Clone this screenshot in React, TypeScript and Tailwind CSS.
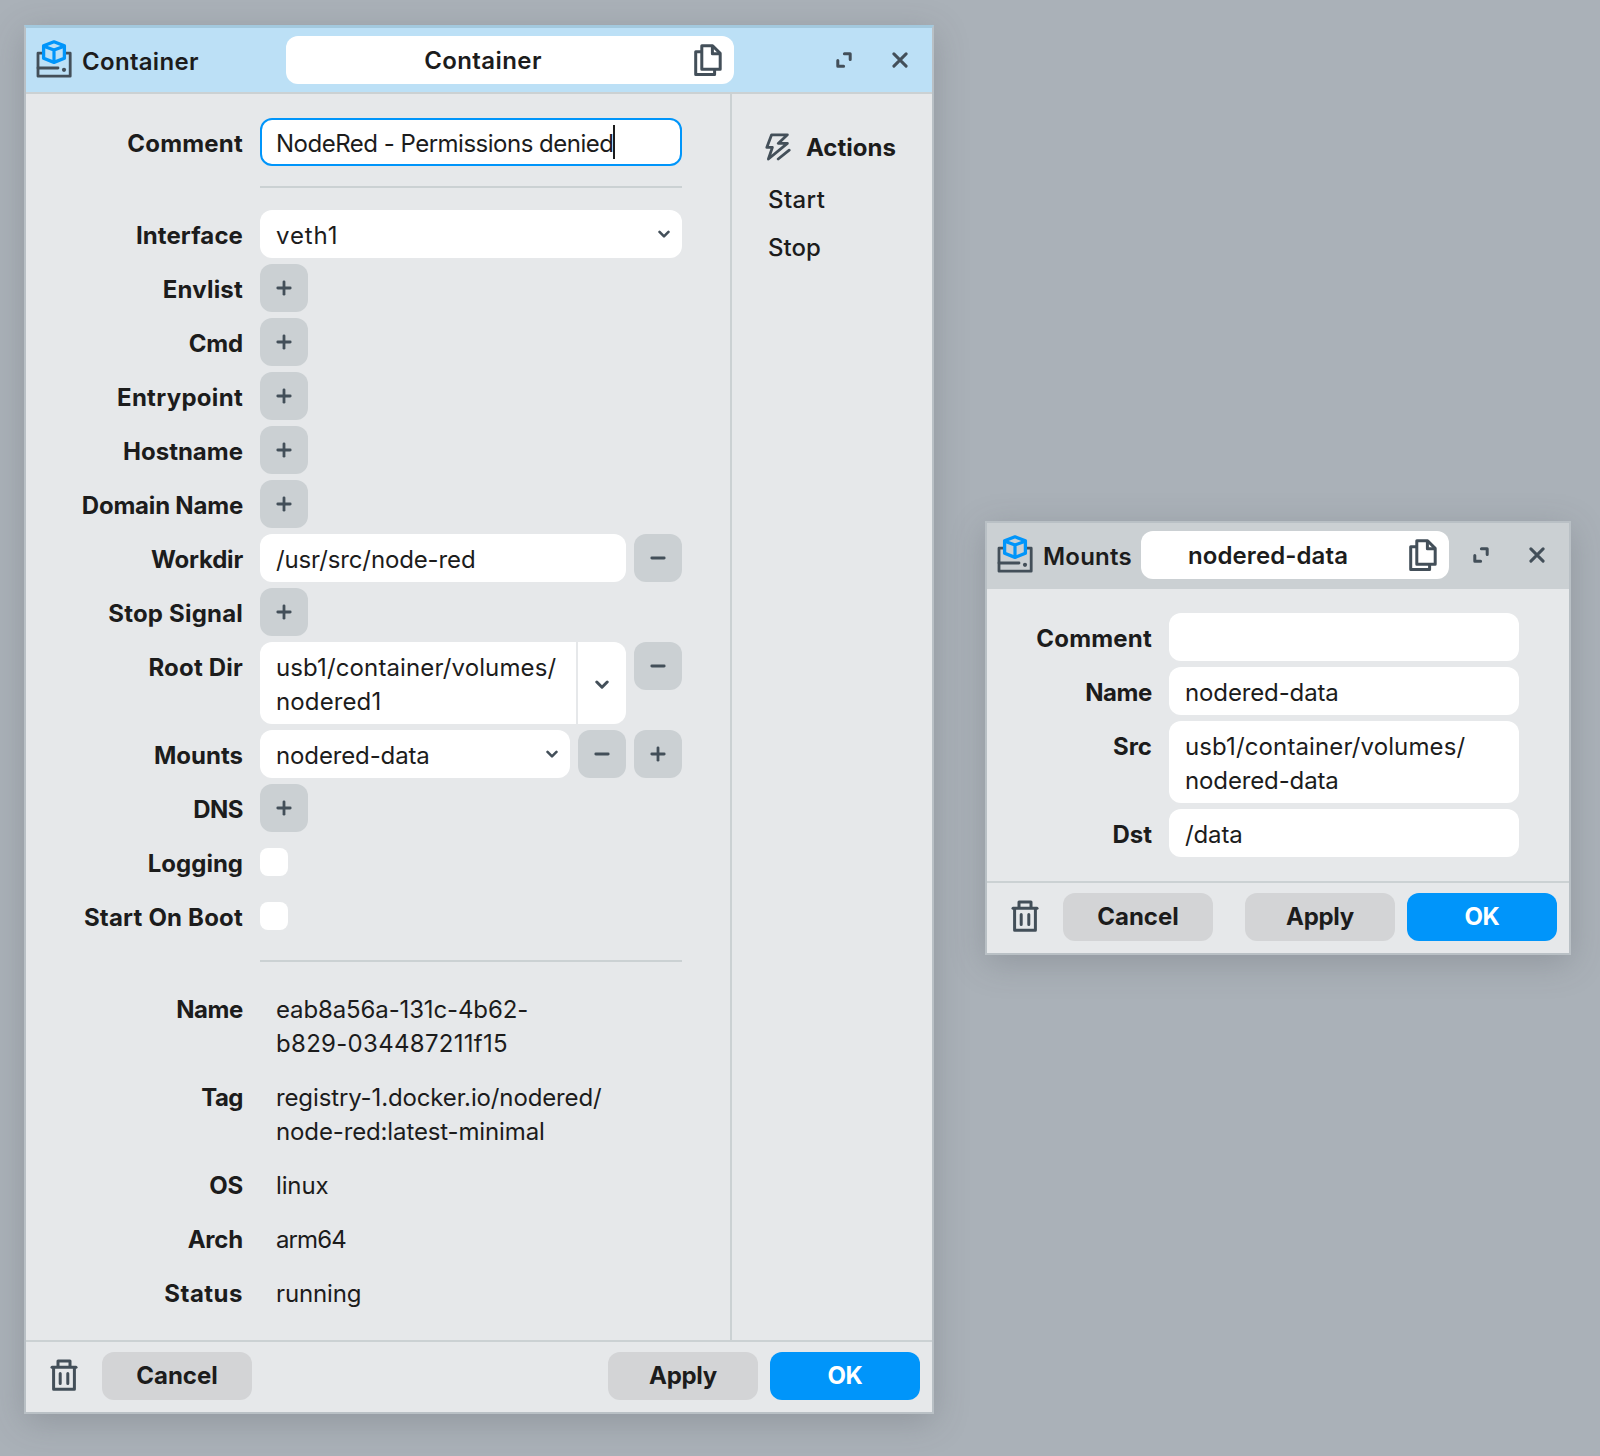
import React from 'react';

type IconProps = { className?: string };

const ContainerIcon: React.FC<IconProps> = ({ className }) => (
  <svg viewBox="0 0 36 38" fill="none" className={className}>
    <path d="M7 13.2H2V36.2H34.2V13.2H29" stroke="#434f59" strokeWidth="2.8" strokeLinejoin="round" />
    <path d="M2 28H22" stroke="#434f59" strokeWidth="2.8" strokeLinecap="round" />
    <circle cx="28" cy="29.8" r="2.1" fill="#434f59" />
    <path d="M18 1.8L28.4 5.8V18.2L18 22.4L7.6 18.2V5.8Z" stroke="#0095fa" strokeWidth="3.3" strokeLinejoin="round" />
    <path d="M7.8 6.2L18 10L28.2 6.2M18 10V22" stroke="#0095fa" strokeWidth="3.2" strokeLinejoin="round" />
  </svg>
);

const CopyIcon: React.FC<IconProps> = ({ className }) => (
  <svg viewBox="0 0 28 32" fill="none" stroke="#434f59" strokeWidth="3" strokeLinejoin="round" className={className}>
    <path d="M7.8 1.7H18.6L26.2 9.4V25.2H7.8Z" />
    <path d="M18.4 2V9.8H26" />
    <path d="M7.4 7.8H1.7V30.4H20.6V25.4" />
  </svg>
);

const ExpandIcon: React.FC<IconProps> = ({ className }) => (
  <svg viewBox="0 0 16 16" fill="none" stroke="#434f59" strokeWidth="3" strokeLinecap="round" strokeLinejoin="round" className={className}>
    <path d="M8.4 1.8H14.2V7.4" />
    <path d="M1.8 8.4V14.2H7.6" />
  </svg>
);

const CloseIcon: React.FC<IconProps> = ({ className }) => (
  <svg viewBox="0 0 16 16" fill="none" stroke="#434f59" strokeWidth="3" strokeLinecap="round" className={className}>
    <path d="M1.9 1.9L14.1 14.1M14.1 1.9L1.9 14.1" />
  </svg>
);

const BoltIcon: React.FC<IconProps> = ({ className }) => (
  <svg viewBox="0 0 26 28" fill="none" stroke="#434f59" strokeWidth="2.8" strokeLinecap="round" strokeLinejoin="round" className={className}>
    <path d="M6.6 1.8H22.4L13.2 10.4H22.4L3.4 26L7.4 14.4H1.8Z" />
    <path d="M13.2 26L24.2 17.2" />
  </svg>
);

const TrashIcon: React.FC<IconProps> = ({ className }) => (
  <svg viewBox="0 0 28 32" fill="none" stroke="#434f59" strokeWidth="3" className={className}>
    <path d="M2 8.2H26" strokeLinecap="round" />
    <path d="M8 7.8V1.9H20V7.8" strokeLinejoin="round" />
    <path d="M3.6 8.2V30.2H24.4V8.2" strokeLinejoin="round" />
    <path d="M10.2 14.4V24.4M17.8 14.4V24.4" strokeLinecap="round" />
  </svg>
);

const ChevronIcon: React.FC<IconProps> = ({ className }) => (
  <svg viewBox="0 0 14 10" fill="none" stroke="#434f59" strokeWidth="3" strokeLinecap="round" strokeLinejoin="round" className={className}>
    <path d="M1.8 2L7 7.2L12.2 2" />
  </svg>
);

const SignButton: React.FC<{ sign: 'plus' | 'minus' }> = ({ sign }) => (
  <button className="flex h-12 w-12 shrink-0 items-center justify-center rounded-xl bg-[#cbd0d3]" title={sign}>
    <svg viewBox="0 0 16 16" fill="none" stroke="#434f59" strokeWidth="2.8" strokeLinecap="round" className="h-4 w-4">
      <path d="M1.8 8H14.2" />
      {sign === 'plus' && <path d="M8 1.8V14.2" />}
    </svg>
  </button>
);

const LABEL_TRACKING: Record<string, string> = {
  Comment: 'tracking-[0.2px]',
  Interface: 'tracking-[0.1px]',
  Envlist: 'tracking-[0.2px]',
  Cmd: 'tracking-[-0.2px]',
  Entrypoint: 'tracking-[0.3px]',
  'Domain Name': 'tracking-[-0.2px]',
  Workdir: 'tracking-[-0.2px]',
  'Stop Signal': 'tracking-[0.2px]',
  'Root Dir': 'tracking-[0.2px]',
  DNS: 'tracking-[-0.5px]',
  'Start On Boot': 'tracking-[0.2px]',
  Name: 'tracking-[-0.4px]',
  Tag: 'tracking-[-0.5px]',
  OS: 'tracking-[-0.2px]',
  Arch: 'tracking-[-0.2px]',
  Status: 'tracking-[0.5px]',
};

const Row: React.FC<{ label: string; labelClass?: string; children?: React.ReactNode }> = ({ label, labelClass = 'w-[218px]', children }) => (
  <div className="flex items-start gap-4">
    <div className={`${labelClass} ${LABEL_TRACKING[label] || 'tracking-normal'} shrink-0 whitespace-nowrap pr-px pt-[9px] text-right font-bold leading-[34px]`}>{label}</div>
    {children}
  </div>
);

const Field: React.FC<{ className?: string; children?: React.ReactNode }> = ({ className = '', children }) => (
  <div className={`min-h-12 rounded-xl bg-white px-4 pb-[5px] pt-[9px] leading-[34px] ${className}`}>{children}</div>
);

const Select: React.FC<{ className?: string; value: string }> = ({ className = '', value }) => (
  <div className={`flex h-12 items-center justify-between rounded-xl bg-white pl-4 pr-3 ${className}`}>
    <span className="pt-[3px]">{value}</span>
    <ChevronIcon className="h-[9px] w-3" />
  </div>
);

const TitlePill: React.FC<{ className?: string; title: string }> = ({ className = '', title }) => (
  <div className={`flex h-12 items-center rounded-xl bg-white pr-3 ${className}`}>
    <span className="flex-1 pt-px text-center font-semibold">{title}</span>
    <CopyIcon className="ml-[14px] h-8 w-7" />
  </div>
);

const Divider = () => <div className="ml-[234px] h-0.5 w-[422px] bg-[#cbd1d3]" />;

const Footer = () => (
  <div className="flex h-[72px] items-start border-t-2 border-[#cbd1d3] pl-6 pr-3 pt-[10px] font-bold tracking-normal">
    <TrashIcon className="mt-[7px] h-8 w-7" />
    <button className="ml-6 h-12 w-[150px] rounded-xl bg-[#d3d4d6]">Cancel</button>
    <div className="ml-auto flex gap-3">
      <button className="h-12 w-[150px] rounded-xl bg-[#d3d4d6] tracking-[-0.3px]">Apply</button>
      <button className="h-12 w-[150px] rounded-xl bg-[#0095fa] tracking-[-0.3px] text-white">OK</button>
    </div>
  </div>
);

const ADDABLE = ['Envlist', 'Cmd', 'Entrypoint', 'Hostname', 'Domain Name'];

const INFO = [
  { label: 'Name', lines: ['eab8a56a-131c-4b62-', 'b829-034487211f15'] },
  { label: 'Tag', lines: ['registry-1.docker.io/nodered/', 'node-red:latest-minimal'] },
  { label: 'OS', lines: ['linux'] },
  { label: 'Arch', lines: ['arm64'] },
  { label: 'Status', lines: ['running'] },
];

const LINE_TRACKING: Record<string, string> = {
  'b829-034487211f15': 'tracking-[0.3px]',
  arm64: 'tracking-[-0.9px]',
};

const ContainerWindow = () => (
  <section className="ml-6 mt-[25px] flex h-[1389px] w-[910px] shrink-0 flex-col border-2 border-t-[3px] border-[#b9c0c5] border-t-[#a3c9de] bg-[#e6e8ea] shadow-[0_8px_32px_rgba(70,76,84,0.25)]">
    <header className="flex h-[66px] shrink-0 items-start border-b-2 border-[#cbd1d3] bg-[#bce0f6] pl-[10px] pt-2">
      <ContainerIcon className="mt-1 h-[38px] w-9" />
      <span className="ml-[10px] mt-[9px] w-[204px] font-semibold leading-[34px] tracking-[0.3px]">Container</span>
      <TitlePill className="w-[448px] tracking-[0.4px]" title="Container" />
      <ExpandIcon className="ml-[102px] mt-4 h-4 w-4" />
      <CloseIcon className="ml-10 mt-4 h-4 w-4" />
    </header>

    <div className="flex flex-1">
      <div className="w-[706px] border-r-2 border-[#cbd1d3] pt-6">
        <Row label="Comment">
          <div className="flex h-12 w-[422px] items-center rounded-xl border-2 border-[#0095fa] bg-white pl-[14px]">
            <span className="pt-[3px] tracking-[-0.5px]">NodeRed - Permissions denied</span>
            <span className="h-[34px] w-0.5 bg-[#1c1c1c]" />
          </div>
        </Row>
        <div className="py-5 pb-[22px]"><Divider /></div>

        <div className="flex flex-col gap-1.5">
          <Row label="Interface"><Select className="w-[422px] tracking-[0.9px]" value="veth1" /></Row>
          {ADDABLE.map(label => (
            <Row key={label} label={label}><SignButton sign="plus" /></Row>
          ))}
          <Row label="Workdir">
            <div className="flex gap-2">
              <Field className="w-[366px]">/usr/src/node-red</Field>
              <SignButton sign="minus" />
            </div>
          </Row>
          <Row label="Stop Signal"><SignButton sign="plus" /></Row>
          <Row label="Root Dir">
            <div className="flex items-start gap-2">
              <div className="flex h-[82px] w-[366px] gap-0.5">
                <Field className="w-[316px] rounded-r-none tracking-[0.12px]">usb1/container/volumes/<br />nodered1</Field>
                <div className="flex w-12 items-center justify-center rounded-r-xl bg-white">
                  <ChevronIcon className="mt-[3px] h-[10px] w-[14px]" />
                </div>
              </div>
              <SignButton sign="minus" />
            </div>
          </Row>
          <Row label="Mounts">
            <div className="flex gap-2">
              <Select className="w-[310px]" value="nodered-data" />
              <SignButton sign="minus" />
              <SignButton sign="plus" />
            </div>
          </Row>
          <Row label="DNS"><SignButton sign="plus" /></Row>
          {['Logging', 'Start On Boot'].map(label => (
            <Row key={label} label={label}>
              <div className="flex h-12 items-start pt-[10px]"><div className="h-7 w-7 rounded-lg bg-white" /></div>
            </Row>
          ))}
        </div>
        <div className="pb-[22px] pt-5"><Divider /></div>

        <div className="flex flex-col gap-1.5">
          {INFO.map(({ label, lines }) => (
            <Row key={label} label={label}>
              <div className="px-4 pb-[5px] pt-[9px] leading-[34px]">
                {lines.map(line => <div key={line} className={LINE_TRACKING[line]}>{line}</div>)}
              </div>
            </Row>
          ))}
        </div>
      </div>

      <aside className="flex-1 pl-[33px] pt-[37px]">
        <div className="flex items-center">
          <BoltIcon className="-mt-0.5 h-7 w-[26px]" />
          <h2 className="ml-[15px] font-bold leading-[34px] tracking-normal">Actions</h2>
        </div>
        <div className="ml-[3px] mt-[11px] font-medium leading-[48px] tracking-normal">
          <div className="tracking-[0.4px]">Start</div>
          <div>Stop</div>
        </div>
      </aside>
    </div>

    <Footer />
  </section>
);

const MountsWindow = () => (
  <section className="ml-[51px] mt-[521px] flex h-[434px] w-[586px] shrink-0 flex-col border-2 border-[#b9c0c5] bg-[#e6e8ea] shadow-[0_8px_32px_rgba(70,76,84,0.25)]">
    <header className="flex h-[66px] shrink-0 items-start bg-[#cbd0d3] pl-[10px] pt-2">
      <ContainerIcon className="mt-1 h-[38px] w-9" />
      <span className="ml-[10px] mt-[9px] w-[98px] font-semibold leading-[34px] tracking-[0.2px]">Mounts</span>
      <TitlePill className="w-[308px] tracking-[0.1px]" title="nodered-data" />
      <ExpandIcon className="ml-6 mt-4 h-4 w-4" />
      <CloseIcon className="ml-10 mt-4 h-4 w-4" />
    </header>

    <div className="flex flex-1 flex-col gap-1.5 pt-6">
      <Row label="Comment" labelClass="w-[166px]"><Field className="w-[350px]" /></Row>
      <Row label="Name" labelClass="w-[166px]"><Field className="w-[350px]">nodered-data</Field></Row>
      <Row label="Src" labelClass="w-[166px]">
        <Field className="w-[350px]"><span className="tracking-[0.12px]">usb1/container/volumes/</span><br />nodered-data</Field>
      </Row>
      <Row label="Dst" labelClass="w-[166px]"><Field className="w-[350px]">/data</Field></Row>
    </div>

    <Footer />
  </section>
);

const App = () => (
  <main className="flex h-[1456px] w-[1600px] items-start overflow-hidden bg-[#aab1b8] font-[Inter,'Liberation_Sans',sans-serif] text-2xl tracking-[-0.13px] text-[#1c1c1c]">
    <ContainerWindow />
    <MountsWindow />
  </main>
);

export default App;
